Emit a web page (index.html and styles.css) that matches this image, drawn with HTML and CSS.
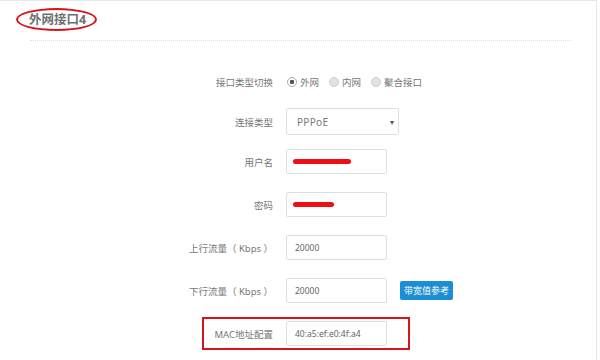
FILE: index.html
```html
<!doctype html>
<html>
<head>
	<meta charset="utf-8" />
	<title>外网接口4</title>
	<link rel="stylesheet" href="styles.css">
</head>
<body>
	<div class="panel">
		<header class="panel-head">
			<h3 class="title">外网接口4<span class="circled"></span></h3>
		</header>

		<form class="form">
			<div class="row">
				<label class="label">接口类型切换</label>
				<div class="radios">
					<span class="radio checked"><i></i>外网</span>
					<span class="radio"><i></i>内网</span>
					<span class="radio"><i></i>聚合接口</span>
				</div>
			</div>

			<div class="row near">
				<label class="label">连接类型</label>
				<div class="field select">PPPoE<span class="caret">▾</span></div>
			</div>

			<div class="row near">
				<label class="label">用户名</label>
				<div class="field"><span class="scribble long"></span></div>
			</div>

			<div class="row">
				<label class="label">密码</label>
				<div class="field"><span class="scribble short"></span></div>
			</div>

			<div class="row">
				<label class="label">上行流量（ Kbps ）</label>
				<div class="field">20000</div>
			</div>

			<div class="row">
				<label class="label">下行流量（ Kbps ）</label>
				<div class="field">20000</div>
				<a class="btn" href="#">带宽值参考</a>
			</div>

			<div class="row">
				<span class="marker"></span>
				<label class="label">MAC地址配置</label>
				<div class="field">40:a5:ef:e0:4f:a4</div>
			</div>
		</form>
	</div>
</body>
</html>
```

FILE: styles.css
```css
html, body {
	margin: 0;
	background: #fff;
	color: #555;
	font-family: "Noto Sans", "Noto Sans CJK SC", sans-serif;
	overflow: hidden;
}

.panel {
	width: 597px;
	height: 360px;
	border-top: 1px solid #e4e8ee;
	border-right: 1px solid #e4e8ee;
	box-sizing: border-box;
}

.panel-head {
	margin: 0 24px 0 30px;
	height: 39px;
	border-bottom: 1px dotted #dde0e5;
}

.title {
	position: relative;
	display: inline-block;
	margin: 11px 0 0 -1px;
	font-size: 12.5px;
	line-height: 16px;
	font-weight: bold;
	color: #707070;
}

/* red annotation round the title */
.circled {
	position: absolute;
	left: -13px;
	top: -4px;
	width: 77px;
	height: 19px;
	border: 2px solid #d7141c;
	border-radius: 50%;
}

.form {
	padding-top: 28px;
}

.row {
	position: relative;
	display: flex;
	align-items: center;
	height: 25px;
	margin-top: 18px;
	font-size: 9.5px;
}

.row:first-child { margin-top: 0; }
.row.near { margin-top: 15px; }

.label {
	width: 273px;
	text-align: right;
	margin-right: 13px;
	color: #777;
}

.radios {
	display: flex;
	gap: 10px;
	margin-left: 1px;
}

.radio {
	display: flex;
	align-items: center;
	gap: 3px;
	color: #777;
}

.radio i {
	display: block;
	width: 8px;
	height: 8px;
	border: 1px solid #cfcfcf;
	border-radius: 50%;
	background: #e2e2e2;
	box-sizing: content-box;
}

.radio.checked i {
	background: radial-gradient(circle, #555 0 2px, #fff 2.5px);
	border-color: #aaa;
}

.field {
	position: relative;
	display: flex;
	align-items: center;
	width: 101px;
	height: 25px;
	padding: 0 8px;
	box-sizing: border-box;
	border: 1px solid #e0e0e0;
	border-radius: 2px;
	font-size: 8.5px;
	color: #666;
}

.field.select {
	width: 113px;
	height: 27px;
	font-size: 10px;
	letter-spacing: 0.3px;
	padding-left: 10px;
	color: #777;
}

.caret {
	position: absolute;
	right: 4px;
	font-size: 8px;
	color: #555;
}

.scribble {
	display: block;
	height: 5px;
	border-radius: 3px;
	background: #ee0f14;
	margin-left: -2px;
}

.scribble.long { width: 58px; }
.scribble.short { width: 41px; }

.btn {
	margin-left: 13px;
	padding: 0 4px;
	height: 19px;
	line-height: 19px;
	background: #1c8fd4;
	color: #fff;
	font-size: 9px;
	text-decoration: none;
	border-radius: 2px;
}

/* red annotation round the mac row */
.marker {
	position: absolute;
	left: 202px;
	top: -4px;
	width: 208px;
	height: 33px;
	border: 2px solid #d7141c;
	box-sizing: border-box;
}
```
